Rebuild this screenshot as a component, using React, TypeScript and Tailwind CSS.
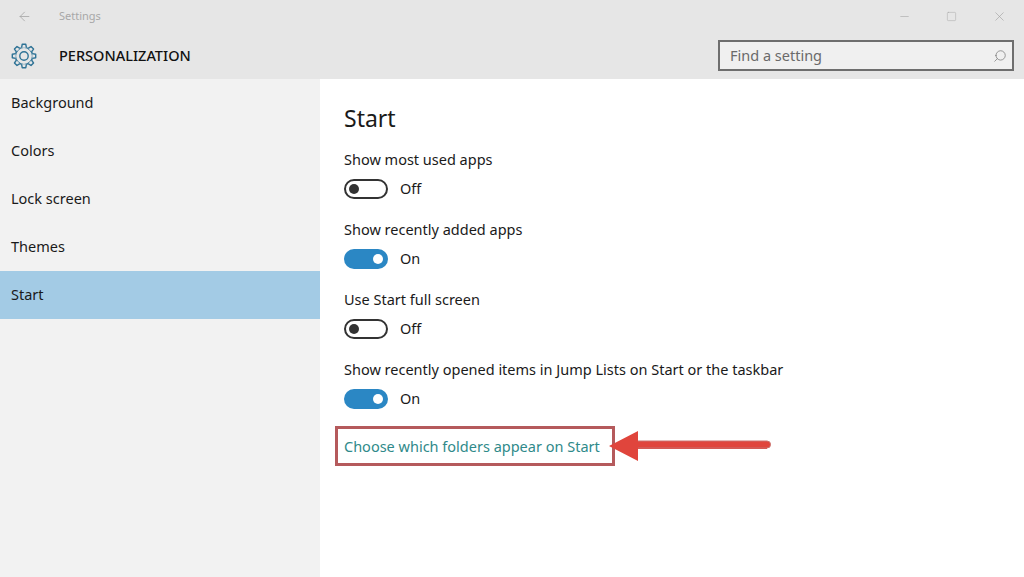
import { ArrowLeft, Minus, Search, Square, X } from 'lucide-react';

const font = "font-['Noto_Sans',sans-serif]";

const navItems = ['Background', 'Colors', 'Lock screen', 'Themes', 'Start'];

const settings = [
  { label: 'Show most used apps', on: false },
  { label: 'Show recently added apps', on: true },
  { label: 'Use Start full screen', on: false },
  { label: 'Show recently opened items in Jump Lists on Start or the taskbar', on: true },
];

function Gear() {
  // eight toothed gear, same as the Windows 10 settings glyph
  const teeth = Array.from({ length: 8 }, (_, i) => i * 45);
  return (
    <svg width="26" height="26" viewBox="0 0 26 26" fill="none" stroke="#2f7396" strokeWidth="1.4" strokeLinejoin="round">
      <circle cx="13" cy="13" r="4.2" />
      <circle cx="13" cy="13" r="8.6" />
      {teeth.map((a) => (
        <path key={a} d="M10.6 4.7 L11.2 1.3 H14.8 L15.4 4.7" fill="#e6e6e6" transform={`rotate(${a} 13 13)`} />
      ))}
    </svg>
  );
}

function Toggle({ on }: { on: boolean }) {
  if (on) {
    return (
      <div className="flex h-5 w-11 items-center justify-end rounded-full bg-[#2b87c4] px-[5px]">
        <div className="h-2.5 w-2.5 rounded-full bg-white" />
      </div>
    );
  }
  return (
    <div className="flex h-5 w-11 items-center rounded-full border-2 border-[#333333] bg-white px-[3px]">
      <div className="h-2.5 w-2.5 rounded-full bg-[#333333]" />
    </div>
  );
}

export default function App() {
  return (
    <div className={`flex h-[577px] w-[1024px] flex-col overflow-hidden bg-white ${font}`}>
      <header className="h-[79px] shrink-0 bg-[#e6e6e6]">
        <div className="flex h-[32px] items-center">
          <ArrowLeft className="ml-[17px] h-[15px] w-[15px] text-[#a3a3a3]" strokeWidth={1.25} />
          <span className="ml-[27px] text-[11px] text-[#a8a8a8]">Settings</span>
          <div className="ml-auto flex items-center gap-[35px] pr-[17px] text-[#a0a0a0]">
            <Minus className="h-[13px] w-[13px]" strokeWidth={1} />
            <Square className="h-[11px] w-[11px]" strokeWidth={1} />
            <X className="h-[15px] w-[15px]" strokeWidth={1} />
          </div>
        </div>
        <div className="flex h-[47px] items-center">
          <div className="ml-[11px]">
            <Gear />
          </div>
          <span className="ml-[22px] text-[14.5px] font-medium text-[#111111]">PERSONALIZATION</span>
          <div className="mr-[10px] ml-auto flex h-[31px] w-[296px] items-center justify-between border-2 border-[#6e6e6e] bg-[#f0f0f0] pr-[5px] pl-[10px]">
            <span className="text-[14.5px] text-[#6a6a6a]">Find a setting</span>
            <Search className="h-[14px] w-[14px] -scale-x-100 text-[#777777]" strokeWidth={1.25} />
          </div>
        </div>
      </header>
      <div className="flex min-h-0 flex-1">
        <nav className="w-[320px] shrink-0 bg-[#f2f2f2]">
          {navItems.map((item) => (
            <div
              key={item}
              className={`flex h-12 items-center pl-[11px] text-[14.5px] text-[#1a1a1a] ${item === 'Start' ? 'bg-[#a3cbe5]' : ''}`}
            >
              {item}
            </div>
          ))}
        </nav>
        <main className="flex-1 pt-[21px] pl-[24px] text-[14.5px] text-[#1a1a1a]">
          <h1 className="h-[36px] text-[23px] leading-[36px] font-normal">Start</h1>
          <div className="mt-[13px]">
            {settings.map((s) => (
              <div key={s.label} className="h-[70px]">
                <div className="h-[20px] leading-[20px]">{s.label}</div>
                <div className="mt-[10px] flex h-5 items-center gap-3">
                  <Toggle on={s.on} />
                  <span>{s.on ? 'On' : 'Off'}</span>
                </div>
              </div>
            ))}
          </div>
          <div className="relative -mt-[3px] -ml-[9px] w-fit">
            <a className="block border-[3px] border-[#b55a5c] py-[5px] pr-[12px] pl-[6px] leading-[24px] text-[#2f8a8a]">
              Choose which folders appear on Start
            </a>
            <svg className="absolute top-[2px] left-[274px]" width="166" height="36" viewBox="0 0 166 36" fill="none">
              <path d="M0 18 L29 3 V13 H158 V21 H29 V33 Z" fill="#e0453c" />
              <path d="M29 13 H158 A3.5 3.5 0 0 1 158 20 H29" fill="#e0453c" stroke="#c9716c" strokeWidth="1" />
            </svg>
          </div>
        </main>
      </div>
    </div>
  );
}
